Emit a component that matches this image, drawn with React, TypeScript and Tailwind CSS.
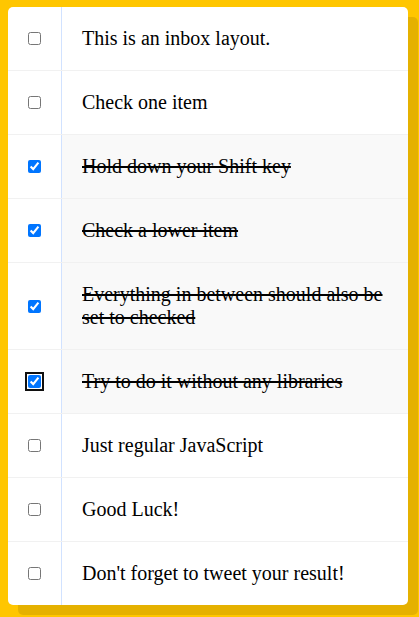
const items = [
  { text: "This is an inbox layout.", checked: false },
  { text: "Check one item", checked: false },
  { text: "Hold down your Shift key", checked: true },
  { text: "Check a lower item", checked: true },
  { text: "Everything in between should also be set to checked", checked: true },
  { text: "Try to do it without any libraries", checked: true, focus: true },
  { text: "Just regular JavaScript", checked: false },
  { text: "Good Luck!", checked: false },
  { text: "Don't forget to tweet your result!", checked: false },
];

export default function App() {
  return (
    <div className="min-h-[617px] bg-[#ffc600] pt-[7px] pl-2 pb-4">
      <div className="w-[400px] bg-white rounded-[5px] shadow-[10px_10px_0_rgba(0,0,0,0.1)]">
        {items.map((item, i) => (
          <div
            key={i}
            className="flex items-center border-b border-[#f1f1f1] last:border-b-0"
          >
            <div className="w-[53px] shrink-0 flex items-center justify-center">
              <input
                type="checkbox"
                defaultChecked={item.checked}
                className={
                  item.focus
                    ? "m-5 w-[13px] h-[13px] outline-2 outline-offset-1 outline-[#101010] rounded-[3px]"
                    : "m-5 w-[13px] h-[13px]"
                }
              />
            </div>
            <p
              className={
                item.checked
                  ? "flex-1 self-stretch flex items-center p-5 border-l border-[#d1e2ff] bg-[#f9f9f9] line-through text-[20px] leading-[23px] font-['Liberation_Serif',serif] text-black"
                  : "flex-1 self-stretch flex items-center p-5 border-l border-[#d1e2ff] text-[20px] leading-[23px] font-['Liberation_Serif',serif] text-black"
              }
            >
              <span>{item.text}</span>
            </p>
          </div>
        ))}
      </div>
    </div>
  );
}
